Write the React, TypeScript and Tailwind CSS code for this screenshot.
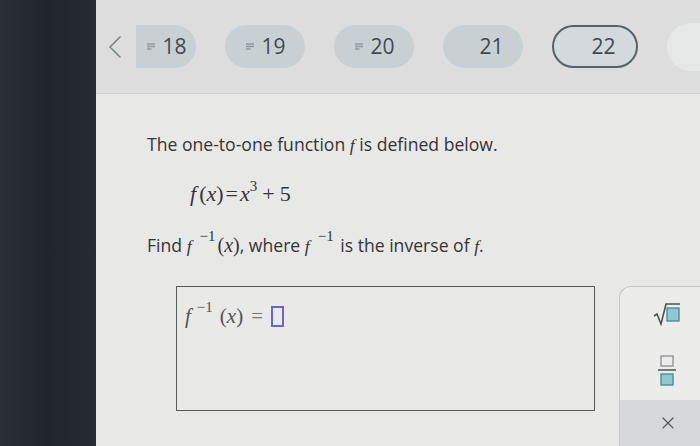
import { ChevronLeft, X } from "lucide-react";

const pills = [
  { n: "18", icon: true, clip: true },
  { n: "19", icon: true },
  { n: "20", icon: true },
  { n: "21", icon: false },
  { n: "22", icon: false, active: true },
];

function ListIcon() {
  return (
    <svg width="10" height="9" viewBox="0 0 10 9" className="text-[#8d979d]">
      <path d="M1 2h8M1 4.5h8M1 7h4.5" stroke="currentColor" strokeWidth="1.3" />
    </svg>
  );
}

function Fn() {
  return <span className="font-['Liberation_Serif',serif] italic">f</span>;
}

function Inv() {
  return (
    <span>
      <Fn />
      <span className="relative -top-[11px] ml-[8px] mr-[2px] font-['Liberation_Serif',serif] text-[15px]">
        −1
      </span>
    </span>
  );
}

export default function App() {
  return (
    <div className="flex h-[446px] w-[700px] overflow-hidden font-['Open_Sans',sans-serif]">
      {/* bezel */}
      <div className="w-[96px] shrink-0 bg-gradient-to-r from-[#2a3035] via-[#1f252a] to-[#262c31]" />

      <div className="flex min-w-0 flex-1 flex-col">
        {/* question nav */}
        <div className="flex h-[93px] shrink-0 items-center overflow-hidden bg-[#dcdddc]">
          <ChevronLeft
            size={40}
            strokeWidth={1}
            className="ml-[-1px] shrink-0 text-[#7d858a]"
          />
          <div className="ml-[1px] flex shrink-0 items-center gap-[29px]">
            {pills.map((p) => (
              <div
                key={p.n}
                className={
                  "flex h-[43px] shrink-0 items-center justify-center text-[21px] text-[#3e4a52] " +
                  (p.clip
                    ? "w-[60px] rounded-r-full bg-[#c9d0d4] "
                    : p.active
                      ? "w-[86px] rounded-full border-2 border-[#56626a] bg-[#d3d9dc] "
                      : "w-[80px] rounded-full bg-[#c9d0d4] ")
                }
              >
                <span className="mr-[5px] flex w-[12px] justify-center">
                  {p.icon && <ListIcon />}
                </span>
                <span>{p.n}</span>
              </div>
            ))}
            <div className="h-[48px] w-[40px] shrink-0 rounded-l-full bg-[#e6e7e7]" />
          </div>
        </div>

        {/* question body */}
        <div className="flex flex-1 flex-col border-t border-[#d0d0d0] bg-[#e8e8e6] pt-[38px] text-[#353535]">
          <p className="ml-[51px] text-[17.6px] leading-[24px]">
            The one-to-one function <Fn /> is defined below.
          </p>

          <p className="ml-[94px] mt-[24px] font-['Liberation_Serif',serif] text-[22px] leading-[26px]">
            <span className="italic">f</span>
            <span className="ml-[3px]">(</span>
            <span className="italic">x</span>
            <span>)</span>
            <span className="mx-[2px]">=</span>
            <span className="italic">x</span>
            <span className="relative -top-[10px] text-[15px]">3</span>
            <span className="mx-[5px]">+</span>
            <span>5</span>
          </p>

          <p className="ml-[51px] mt-[24px] text-[17.6px] leading-[24px]">
            Find <Inv />
            <span className="font-['Liberation_Serif',serif] text-[20px]">
              (<span className="italic">x</span>)
            </span>
            , where <Inv /> is the inverse of <Fn />.
          </p>

          <div className="mt-[27px] flex flex-1">
            <div className="ml-[80px] mb-[34px] h-[125px] w-[419px] border border-[#555a5d] bg-[#e9e9e7] px-[8px] pt-[14px]">
              <div className="flex items-center font-['Liberation_Serif',serif] text-[21px] text-[#555]">
                <span className="italic">f</span>
                <span className="relative -top-[10px] ml-[6px] text-[15px]">−1</span>
                <span className="ml-[7px]">(</span>
                <span className="italic">x</span>
                <span>)</span>
                <span className="mx-[8px] text-[#777]">=</span>
                <span className="inline-block h-[21px] w-[13px] border-2 border-[#6a64cf]" />
              </div>
            </div>

            <div className="ml-[24px] flex flex-1 flex-col overflow-hidden rounded-tl-[12px] border-l border-t border-[#c4c6c7] bg-[#ececea]">
              <div className="flex flex-1 flex-col items-center pl-[14px] pt-[15px]">
                <svg width="28" height="24" viewBox="0 0 28 24">
                  <path
                    d="M1 14l3-2 4 10 5-20h14"
                    fill="none"
                    stroke="#4c5357"
                    strokeWidth="1.6"
                  />
                  <rect x="14" y="6" width="12" height="13" fill="#8fc9cf" stroke="#4b8f98" strokeWidth="1.4" />
                </svg>
                <svg width="20" height="31" viewBox="0 0 20 31" className="mt-[29px]">
                  <rect x="4" y="1" width="12" height="10" fill="#ececea" stroke="#8a8f92" strokeWidth="1.3" />
                  <path d="M1 15h18" stroke="#4c5357" strokeWidth="1.6" />
                  <rect x="4" y="19" width="12" height="11" fill="#8fc9cf" stroke="#4b8f98" strokeWidth="1.4" />
                </svg>
              </div>
              <div className="flex h-[46px] items-center justify-center bg-[#d6d8d9] pl-[16px]">
                <X size={20} strokeWidth={1.4} className="text-[#555b5f]" />
              </div>
            </div>
          </div>
        </div>
      </div>
    </div>
  );
}
